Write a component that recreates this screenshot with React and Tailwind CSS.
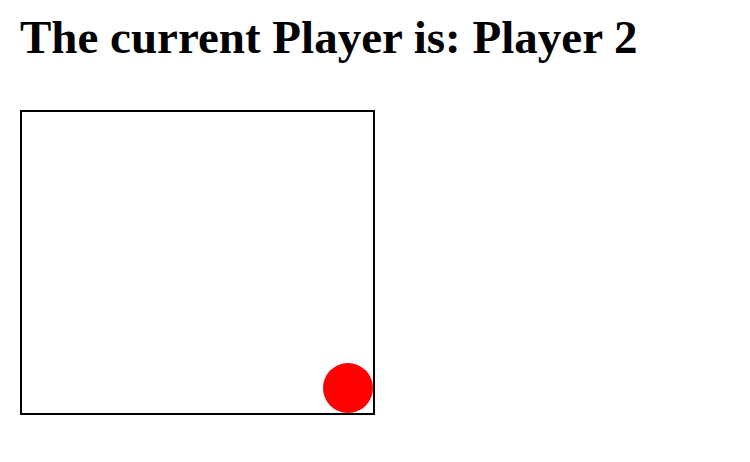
export default function App() {
  const player = "Player 2"

  return (
    <div className="min-h-screen bg-white px-[20px] pt-[14px] font-['Liberation_Serif','Times_New_Roman',serif] text-black">
      <h1 className="text-[47px] leading-[47px] font-bold">The current Player is: {player}</h1>

      <div className="relative mt-[49px] h-[305px] w-[355px] border-2 border-black">
        {/* game piece */}
        <div className="absolute right-0 bottom-0 h-[50px] w-[50px] rounded-full bg-[#ff0000]" />
      </div>
    </div>
  )
}
